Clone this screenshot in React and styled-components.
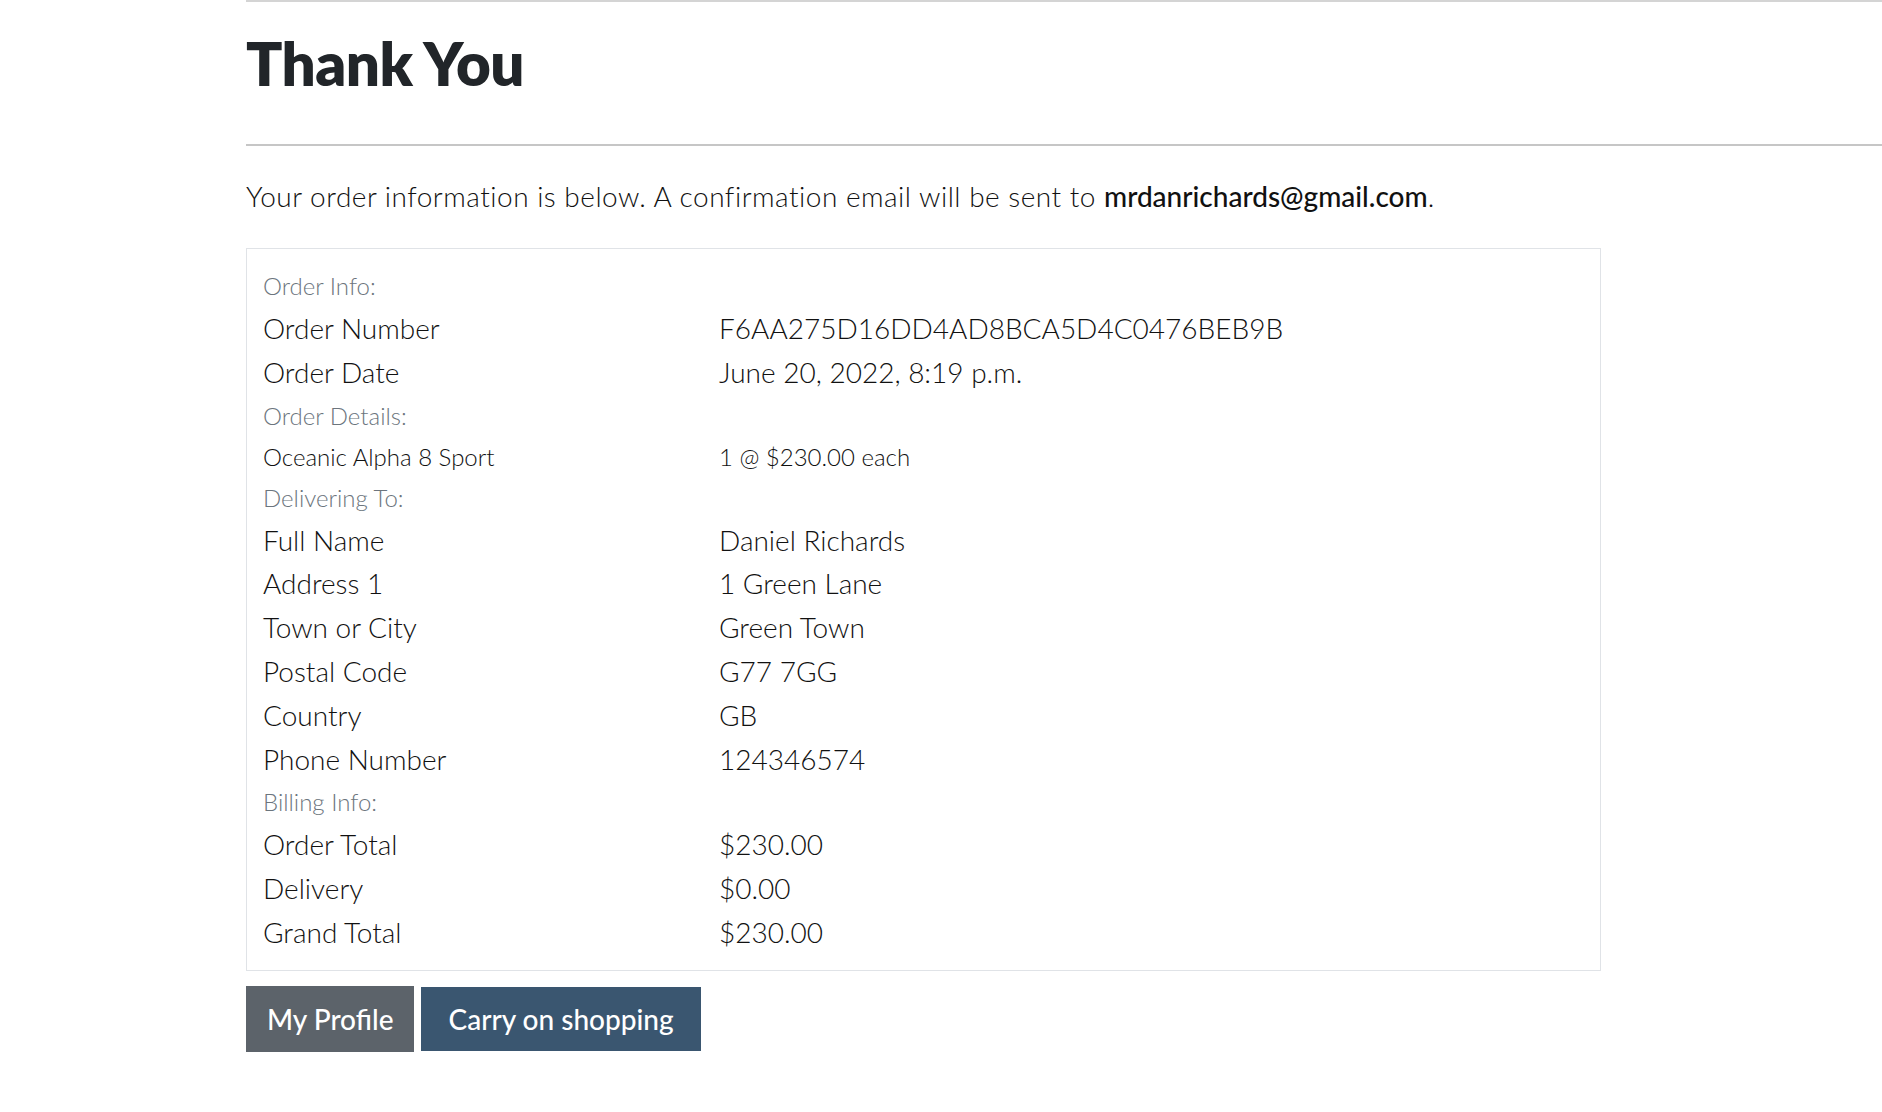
import React from 'react'
import styled, { createGlobalStyle } from 'styled-components'

const GlobalStyle = createGlobalStyle`
    body {
        margin: 0;
        background: #fff;
        font-family: 'Lato', 'Liberation Sans', sans-serif;
        color: #212529;
    }
`;

const Page = styled.div`
    padding-left: 246px;
`;

const Title = styled.h1`
    margin: 0;
    padding-top: 25px;
    height: 146px;
    box-sizing: border-box;
    font-size: 60px;
    line-height: 72px;
    font-weight: 800;
    letter-spacing: -0.5px;
    color: #212529;
    border-top: 2px solid #d4d4d4;
    border-bottom: 2px solid #c6c6c6;
`;

const Lead = styled.p`
    margin: 0;
    padding-top: 34px;
    height: 102px;
    box-sizing: border-box;
    font-size: 28px;
    line-height: 32px;
    font-weight: 300;
    letter-spacing: 0.5px;
    color: #111;

    strong {
        font-weight: 500;
        letter-spacing: 0;
    }
`;

const InfoBox = styled.div`
    width: 1355px;
    box-sizing: border-box;
    border: 1px solid #e0e3e7;
    padding: 16px 16px 15px;
    display: grid;
    grid-template-columns: 456px 1fr;
`;

const Section = styled.div`
    grid-column: 1 / span 2;
    font-size: 24px;
    line-height: 42px;
    font-weight: 300;
    color: #6c757d;
`;

const Cell = styled.div`
    font-size: ${p => (p.$small ? '24px' : '28px')};
    line-height: ${p => (p.$small ? '40px' : '43.8px')};
    font-weight: 300;
    color: #111;
    white-space: nowrap;
`;

const Actions = styled.div`
    display: flex;
    align-items: center;
    gap: 7px;
    margin-top: 15px;
`;

const Button = styled.a`
    display: inline-flex;
    align-items: center;
    justify-content: center;
    height: ${p => (p.$dark ? '64px' : '66px')};
    padding: 0 ${p => (p.$dark ? '27px' : '21px')};
    font-size: 28px;
    font-weight: 500;
    color: #fff;
    text-decoration: none;
    background: ${p => (p.$dark ? '#3a5670' : '#5c636a')};
`;

const sections = [
    {
        title: 'Order Info:',
        rows: [
            ['Order Number', 'F6AA275D16DD4AD8BCA5D4C0476BEB9B'],
            ['Order Date', 'June 20, 2022, 8:19 p.m.'],
        ],
    },
    {
        title: 'Order Details:',
        small: true,
        rows: [['Oceanic Alpha 8 Sport', '1 @ $230.00 each']],
    },
    {
        title: 'Delivering To:',
        rows: [
            ['Full Name', 'Daniel Richards'],
            ['Address 1', '1 Green Lane'],
            ['Town or City', 'Green Town'],
            ['Postal Code', 'G77 7GG'],
            ['Country', 'GB'],
            ['Phone Number', '124346574'],
        ],
    },
    {
        title: 'Billing Info:',
        rows: [
            ['Order Total', '$230.00'],
            ['Delivery', '$0.00'],
            ['Grand Total', '$230.00'],
        ],
    },
]

export default function App() {
    return (
        <>
            <GlobalStyle />
            <Page>
                <Title>Thank You</Title>
                <Lead>
                    Your order information is below. A confirmation email will be sent to{' '}
                    <strong>mrdanrichards@gmail.com</strong>.
                </Lead>
                <InfoBox>
                    {sections.map((s) => (
                        <React.Fragment key={s.title}>
                            <Section>{s.title}</Section>
                            {s.rows.map(([label, value]) => (
                                <React.Fragment key={label}>
                                    <Cell $small={s.small}>{label}</Cell>
                                    <Cell $small={s.small}>{value}</Cell>
                                </React.Fragment>
                            ))}
                        </React.Fragment>
                    ))}
                </InfoBox>
                <Actions>
                    <Button href="#">My Profile</Button>
                    <Button href="#" $dark>Carry on shopping</Button>
                </Actions>
            </Page>
        </>
    )
}
